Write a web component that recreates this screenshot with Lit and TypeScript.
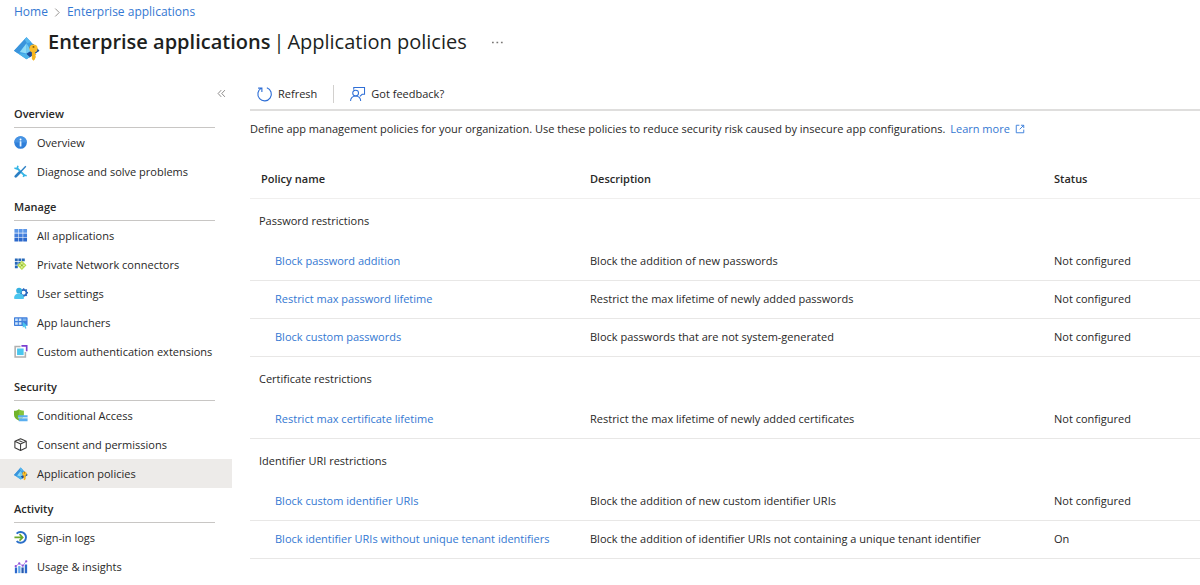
import { LitElement, html, svg, css, nothing } from "lit";
import { customElement, property } from "lit/decorators.js";

const icons: Record<string, unknown> = {
  app: svg`<path d="M7.700 .7 15.600 9 7.700 14.300 0 9z" fill="#3c9fe4"/><path d="M7.700 .7 0 9l2.500 1.700L8 4.500z" fill="#3a94dc"/><path d="M7.700 .7 10.500 3.700 8 4.500 6.500 2z" fill="#57b7ee"/><path d="M10 6l2-1 3.600 4-6 4.200-2-2.200z" fill="#1d4a9a"/><path d="M2.500 10.700 7.700 14.300l2-1.400-2.200-2z" fill="#4db3ea"/><path d="M7.700 4.500 3.600 9.800l4.200 1z" fill="#8fdcf8"/><path d="M7.700 4.500 7.800 10.800 10.500 9z" fill="#6fcbf4"/><circle cx="12" cy="7.700" r="2.500" fill="#f9bd2c"/><path d="M11 9.500h2v1.300l.8.700-.8.700.6.700-.6.700v.6L12 15.200l-1-1z" fill="#f6b51f"/><circle cx="12" cy="6.700" r=".6" fill="#8a5a00"/>`,
  info: svg`<circle cx="7.500" cy="7.500" r="7.200" fill="#2f7fd9"/><path d="M.3 7.500a7.200 7.200 0 0 1 14.400 0z" fill="#4793e3"/><circle cx="7.500" cy="3.900" r="1.100" fill="#fff"/><rect x="6.500" y="6" width="2" height="6" rx=".6" fill="#e6f3ff"/>`,
  tools: svg`<path d="M3 3l9.500 9.500" stroke="#35b5e5" stroke-width="2.200"/><path d="M13.500 1.500 6 9.500" stroke="#2c7fc4" stroke-width="1.600"/><path d="M6.300 8.700 2 13" stroke="#2a7fc4" stroke-width="3.200" stroke-linecap="round"/><path d="M.5 3.500 3.500 4.500 4.500 .8M10.500 13.500l1.200-2 2.800.8" fill="none" stroke="#35b5e5" stroke-width="1.800"/>`,
  grid: svg`<path d="M.5 0h4.400v4.400H.5zM5.500 0h4.400v4.400H5.500zM10.500 0h4.400v4.400h-4.400z" fill="#5c97e8"/><path d="M.5 5h4.400v4.400H.5zM5.500 5h4.400v4.400H5.500zM10.500 5h4.400v4.400h-4.400z" fill="#437fdc"/><path d="M.5 10h4.400v4.400H.5zM5.500 10h4.400v4.400H5.500zM10.500 10h4.400v4.400h-4.400z" fill="#2c69cc"/>`,
  connectors: svg`<path d="M1 .5h3.300v3.300H1zM5 .5h3.300v3.300H5zM9 .5h3.300v3.300H9zM1 4.500h3.300v3.300H1zM5 4.500h3.300v3.300H5zM1 8.500h3.300v3.300H1z" fill="#2668b8"/><path d="M9 3 14.300 8.300 9 13.600 3.700 8.300z" fill="#b5d948"/><path d="M9 5v6.600M5.700 8.300h6.600" stroke="#eef7c5" stroke-width="1.200"/><circle cx="9" cy="8.300" r="1.200" fill="#8bb82a"/>`,
  user: svg`<circle cx="11" cy="6.500" r="3.200" fill="none" stroke="#2b67bd" stroke-width="2"/><path d="M11 1.500v2M11 9.500v2M14 6.500h2M13.400 4.100l1.200-1.200M13.400 8.900l1.200 1.200" stroke="#2b67bd" stroke-width="1.600"/><circle cx="11" cy="6.500" r="1.900" fill="#fff"/><circle cx="5.800" cy="4.200" r="3.300" fill="#35b0e0"/><path d="M0 13C0 9.500 2.300 7.500 5.800 7.500S11.500 9.500 11.500 13c0 .8-11.500.8-11.500 0z" fill="#4bc5ee"/>`,
  launcher: svg`<rect x="0" y="1.500" width="15.500" height="10" rx=".8" fill="#3f7edb"/><path d="M1.300 2.800h3v3h-3zM5.500 2.800h3v3h-3zM1.300 7h3v3h-3zM5.500 7h3v3h-3z" fill="#d0e6fb"/><path d="M9.800 2.800h4.400v3H9.800z" fill="#79b0ee"/><path d="M10 6.500 15.500 11.500h-2.200l1 2.500-1.500.6-1-2.500L10 13.500z" fill="#4bc5ee"/>`,
  extension: svg`<path d="M7.500 1.800H1.300v12H13V8" fill="none" stroke="#b0b0b0" stroke-width="1.800"/><rect x="3.500" y="4" width="7.500" height="7.500" fill="#4ac6ee"/><path d="M8.500 1h6v6" fill="none" stroke="#7b3fd0" stroke-width="1.900"/>`,
  shield: svg`<path d="M0 2C2.500 2 4 1.500 5.500 .3 7 1.500 8.500 2 11 2v4.500c0 3.200-2.300 5-5.500 6.500C2.300 11.500 0 9.700 0 6.500z" fill="#6fb32a"/><path d="M5.500 .3C7 1.500 8.500 2 11 2v4.500c0 3.200-2.300 5-5.500 6.500z" fill="#86c43c"/><path d="M4.500 7h11v2.800h-11zM5.500 10.500h10V14h-10z" fill="#5aaef0"/><path d="M4.500 10.100h11" stroke="#d2eafc" stroke-width=".8"/>`,
  cube: svg`<path d="M7.500 .8 14 3.800v7.400l-6.500 3L1 11.200V3.800zM1 3.800l6.500 3 6.500-3M7.500 6.800v7.400M4.300 2.300l6.500 3" fill="none" stroke="#3b3a39" stroke-width="1.200" stroke-linejoin="round"/>`,
  signin: svg`<path d="M3 3A6.200 6.200 0 1 1 3 11.500" fill="none" stroke="#2a6fc9" stroke-width="2.200"/><path d="M.5 7.300h9M6.300 3.600 10 7.300 6.300 11" fill="none" stroke="#6aa82a" stroke-width="1.800"/>`,
  usage: svg`<path d="M1 8.500h2.600V15H1zM12.300 5H15v10h-2.700z" fill="#2c69cc"/><path d="M4.800 7h2.600v8H4.800z" fill="#62a9ec"/><path d="M8.500 8.500h2.600V15H8.500z" fill="#2558ac"/><path d="M2 7 6 4l4 2.500 4-5" fill="none" stroke="#b07fe6"/><circle cx="2" cy="7" r="1.300" fill="#8f52d8"/><circle cx="6" cy="4" r="1.300" fill="#8f52d8"/><circle cx="10" cy="6.500" r="1.300" fill="#8f52d8"/><circle cx="14" cy="1.500" r="1.300" fill="#8f52d8"/>`,
  refresh: svg`<path d="M10.500 .8A7.200 7.200 0 1 1 4.800 1.200M1.200 1.200H5.200V5.200" fill="none" stroke="#2f6fd6" stroke-width="1.200"/>`,
  feedback: svg`<path d="M4 3V.6h11.500v7.200H13L10.500 10" fill="none" stroke="#2f6fd6" stroke-width="1.100"/><circle cx="6" cy="6.500" r="3.100" fill="none" stroke="#2f6fd6" stroke-width="1.100"/><path d="M.6 15c0-3.200 2.200-5.400 5.400-5.400s5.400 2.200 5.400 5.400" fill="none" stroke="#2f6fd6" stroke-width="1.100"/>`,
  external: svg`<path d="M7 2H2v12h12V9M9.500 2H14v4.500M14 2 7.500 8.500" fill="none" stroke="#3b7fdb" stroke-width="1.500"/>`,
  chevron: svg`<path d="M4 1l7 7-7 7" fill="none" stroke="#8a8886" stroke-width="1.600"/>`,
  collapse: svg`<path d="M7.500 2 2 8l5.500 6M14 2 8.500 8l5.500 6" fill="none" stroke="#797775" stroke-width="1.500"/>`,
  more: svg`<path d="M0 7h2.500v2H0zM6.500 7H9v2H6.500zM13 7h2.500v2H13z" fill="#797775"/>`,
};

@customElement("ui-icon")
class UiIcon extends LitElement {
  @property() name = "app";
  static styles = css`
    :host { display: block; flex: none; width: 14px; height: 14px; }
    svg { display: block; width: 100%; height: 100%; overflow: visible; }
  `;
  render() {
    return html`<svg viewBox="0 0 16 16" aria-hidden="true">${icons[this.name]}</svg>`;
  }
}

const menu = [
  { title: "Overview", items: [["info", "Overview"], ["tools", "Diagnose and solve problems"]] },
  {
    title: "Manage",
    items: [
      ["grid", "All applications"],
      ["connectors", "Private Network connectors"],
      ["user", "User settings"],
      ["launcher", "App launchers"],
      ["extension", "Custom authentication extensions"],
    ],
  },
  {
    title: "Security",
    items: [["shield", "Conditional Access"], ["cube", "Consent and permissions"], ["app", "Application policies"]],
  },
  { title: "Activity", items: [["signin", "Sign-in logs"], ["usage", "Usage & insights"]] },
];

const policies = [
  {
    group: "Password restrictions",
    rows: [
      ["Block password addition", "Block the addition of new passwords", "Not configured"],
      ["Restrict max password lifetime", "Restrict the max lifetime of newly added passwords", "Not configured"],
      ["Block custom passwords", "Block passwords that are not system-generated", "Not configured"],
    ],
  },
  {
    group: "Certificate restrictions",
    rows: [["Restrict max certificate lifetime", "Restrict the max lifetime of newly added certificates", "Not configured"]],
  },
  {
    group: "Identifier URI restrictions",
    rows: [
      ["Block custom identifier URIs", "Block the addition of new custom identifier URIs", "Not configured"],
      [
        "Block identifier URIs without unique tenant identifiers",
        "Block the addition of identifier URIs not containing a unique tenant identifier",
        "On",
      ],
    ],
  },
];

@customElement("app-root")
class AppRoot extends LitElement {
  static styles = css`
    :host {
      display: block;
      background: #fff;
      color: #292827;
      font: 11px/18px "Open Sans", "Noto Sans", sans-serif;
    }
    a { color: #3478d2; text-decoration: none; }
    a:hover { text-decoration: underline; }
    button { border: 0; padding: 0; background: none; color: inherit; font: inherit; cursor: pointer; }
    h1, h2, ul, p { margin: 0; padding: 0; }
    .crumbs { display: flex; align-items: center; gap: 5px; padding: 3px 14px 0; font-size: 12px; }
    .crumbs ui-icon { width: 9px; height: 9px; }
    .head { display: flex; align-items: center; padding: 6px 14px 0; height: 30px; }
    .logo { width: 26px; height: 26px; margin-top: 14px; }
    h1 { display: flex; gap: 3px; margin-left: 8px; font-size: 20px; line-height: 30px; font-weight: 400; color: #201f1e; }
    h1 strong { font-weight: 600; }
    .more { margin-left: 25px; }
    .more ui-icon { width: 11px; height: 11px; }
    .body { display: grid; grid-template-columns: 232px minmax(0, 1fr); column-gap: 18px; padding-top: 22px; }
    .side { display: flex; flex-direction: column; }
    .collapse { align-self: flex-end; display: flex; align-items: flex-end; height: 23px; padding: 0 6px 4px; box-sizing: border-box; }
    .collapse ui-icon { width: 9px; height: 9px; }
    h2 {
      margin: 0 17px 0 14px;
      padding: 12px 0 4px;
      border-bottom: 1px solid #c8c6c4;
      font-size: 11px;
      line-height: 18px;
      font-weight: 600;
    }
    h2:first-of-type { padding-top: 3px; }
    ul { list-style: none; }
    .item { display: flex; align-items: center; gap: 9px; height: 29px; padding-left: 14px; color: inherit; }
    .item.selected { background: #edebe9; }
    .bar { display: flex; align-items: center; height: 30px; padding-left: 7px; border-bottom: 2px solid #dfdedd; }
    .bar button { display: flex; align-items: center; gap: 6px; }
    .bar ui-icon { width: 15px; height: 15px; }
    .sep { width: 1px; height: 18px; margin: 0 16px; background: #d2d0ce; }
    .intro { padding-top: 9px; }
    .learn { display: inline-flex; align-items: center; gap: 5px; margin-left: 2px; }
    .learn ui-icon { width: 10px; height: 10px; }
    table { width: 100%; margin-top: 22px; border-collapse: separate; border-spacing: 0; table-layout: fixed; }
    .c1 { width: 330px; }
    .c3 { width: 156px; }
    th, td { box-sizing: border-box; padding: 0 10px; text-align: left; font-weight: 400; }
    thead th { height: 39px; font-weight: 600; border-bottom: 1px solid #f0efee; }
    thead th:first-child { padding-left: 11px; }
    .group { height: 44px; padding: 0 9px; }
    td { height: 38px; padding-bottom: 1px; border-bottom: 1px solid #e8e7e6; }
    td:first-child { padding-left: 25px; white-space: nowrap; }
  `;

  render() {
    return html`
      <nav class="crumbs" aria-label="Breadcrumb">
        <a href="#">Home</a><ui-icon name="chevron"></ui-icon><a href="#">Enterprise applications</a>
      </nav>
      <header class="head">
        <ui-icon class="logo" name="app"></ui-icon>
        <h1><strong>Enterprise applications</strong><span>|</span><span>Application policies</span></h1>
        <button class="more" aria-label="More"><ui-icon name="more"></ui-icon></button>
      </header>
      <div class="body">
        <nav class="side" aria-label="Menu">
          <button class="collapse" aria-label="Collapse menu"><ui-icon name="collapse"></ui-icon></button>
          ${menu.map(
            (s) => html`<h2>${s.title}</h2>
              <ul>
                ${s.items.map(([icon, label]) => {
                  const on = label === "Application policies";
                  return html`<li>
                    <a class="item ${on ? "selected" : ""}" href="#" aria-current=${on ? "page" : nothing}
                      ><ui-icon name=${icon}></ui-icon>${label}</a>
                  </li>`;
                })}
              </ul>`
          )}
        </nav>
        <main>
          <div class="bar">
            <button><ui-icon name="refresh"></ui-icon>Refresh</button>
            <span class="sep"></span>
            <button><ui-icon name="feedback"></ui-icon>Got feedback?</button>
          </div>
          <p class="intro">
            Define app management policies for your organization. Use these policies to reduce security risk caused by
            insecure app configurations.
            <a class="learn" href="#">Learn more<ui-icon name="external"></ui-icon></a>
          </p>
          <table>
            <colgroup><col class="c1" /><col /><col class="c3" /></colgroup>
            <thead>
              <tr><th scope="col">Policy name</th><th scope="col">Description</th><th scope="col">Status</th></tr>
            </thead>
            ${policies.map(
              (g) => html`<tbody>
                <tr><th class="group" scope="rowgroup" colspan="3">${g.group}</th></tr>
                ${g.rows.map(
                  ([name, text, status]) => html`<tr><td><a href="#">${name}</a></td><td>${text}</td><td>${status}</td></tr>`
                )}
              </tbody>`
            )}
          </table>
        </main>
      </div>
    `;
  }
}
